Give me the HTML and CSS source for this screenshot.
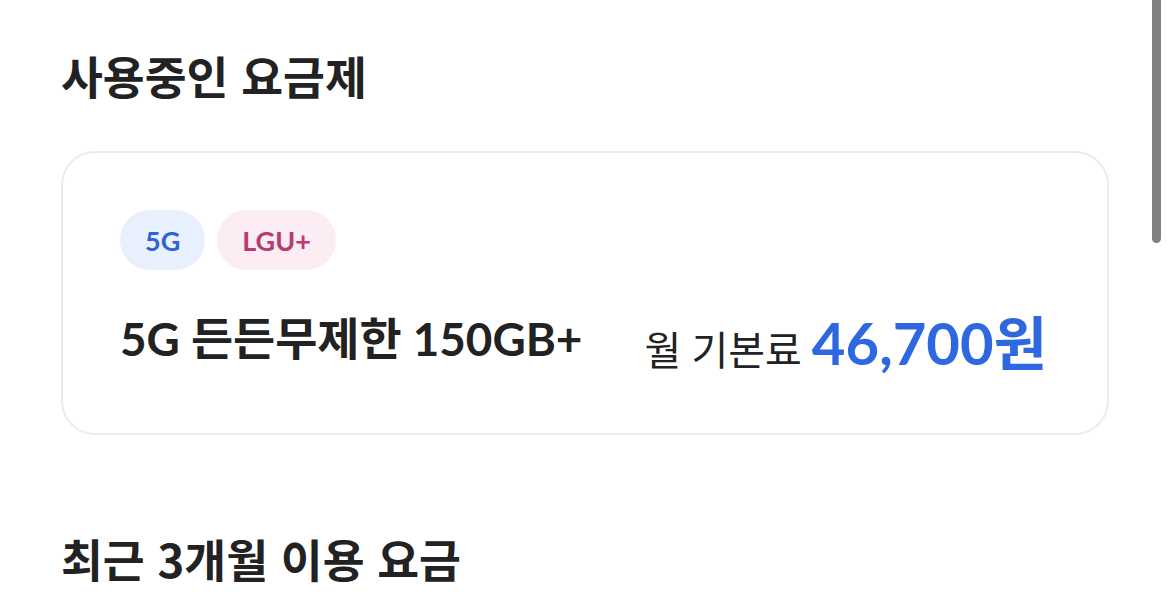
FILE: index.html
```html
<!DOCTYPE html>
<html lang="ko">
<head>
<meta charset="utf-8">
<link rel="stylesheet" href="styles.css">
</head>
<body>
<div class="page">
  <h2 class="section-title">사용중인 요금제</h2>
  <div class="plan-card">
    <div class="tags">
      <span class="tag tag-5g">5G</span>
      <span class="tag tag-lgu">LGU+</span>
    </div>
    <div class="plan-row">
      <span class="plan-name">5G 든든무제한 150GB+</span>
      <span class="plan-price"><span class="price-label">월 기본료</span> <span class="price-value">46,700원</span></span>
    </div>
  </div>
  <h2 class="section-title second">최근 3개월 이용 요금</h2>
</div>
<div class="scroll-thumb"></div>
</body>
</html>
```

FILE: styles.css
```css
html, body {
  margin: 0;
  padding: 0;
  background: #ffffff;
  overflow: hidden;
}
body {
  font-family: Lato, "Noto Sans CJK KR", sans-serif;
  color: #222222;
}
.page {
  width: 1048px;
  padding: 42px 0 0 61px;
}
.section-title {
  margin: 0;
  font-family: "Noto Sans CJK KR", sans-serif;
  font-size: 45.5px;
  font-weight: 700;
  line-height: 66px;
}
.section-title.second {
  margin-top: 90px;
}
.plan-card {
  margin-top: 43px;
  border: 2px solid #ebebeb;
  border-radius: 34px;
  padding: 57px 60px 0 57px;
  box-sizing: border-box;
  height: 284px;
}
.tags {
  display: flex;
  gap: 12px;
}
.tag {
  display: inline-flex;
  align-items: center;
  justify-content: center;
  height: 60px;
  padding: 0 25px;
  border-radius: 30px;
  font-family: Lato, "Noto Sans CJK KR", sans-serif;
  font-weight: 700;
  font-size: 27px;
}
.tag-5g {
  background: #e8f0fd;
  color: #2e64d2;
}
.tag-lgu {
  background: #fcecf4;
  color: #b93a72;
}
.plan-row {
  display: flex;
  justify-content: space-between;
  align-items: center;
  margin-top: 34px;
  height: 72px;
}
.plan-name {
  font-size: 45.8px;
  font-weight: 700;
  margin-top: -8px;
}
.plan-price {
  display: flex;
  align-items: baseline;
  gap: 10px;
}
.price-label {
  font-size: 40px;
  font-weight: 400;
}
.price-value {
  font-size: 58px;
  font-weight: 700;
  color: #2e68e0;
}
.scroll-thumb {
  position: absolute;
  left: 1152px;
  top: 0;
  width: 9px;
  height: 243px;
  background: #808080;
  border-radius: 0 0 5px 5px;
}
```
